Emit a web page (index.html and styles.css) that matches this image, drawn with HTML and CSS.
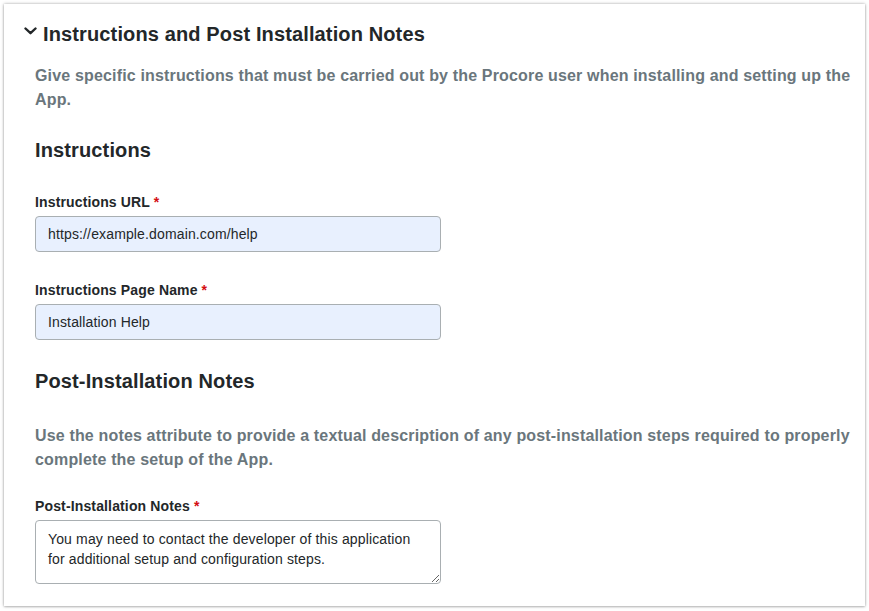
FILE: index.html
```html
<!DOCTYPE html>
<html lang="en">
<head>
<meta charset="utf-8">
<title>Instructions and Post Installation Notes</title>
<link rel="stylesheet" href="styles.css">
</head>
<body>
<section class="card">
  <header class="card-header">
    <svg class="chevron" width="13" height="8" viewBox="0 0 13 8" aria-hidden="true"><path d="M1.5 1.5 L6.5 6.2 L11.5 1.5" fill="none" stroke="#232729" stroke-width="2.4" stroke-linecap="round" stroke-linejoin="round"/></svg>
    <h2 class="card-title">Instructions and Post Installation Notes</h2>
  </header>
  <div class="card-body">
    <p class="desc desc-top">Give specific instructions that must be carried out by the Procore user when installing and setting up the App.</p>
    <h3 class="section-title first">Instructions</h3>
    <div class="field field-first">
      <label class="label">Instructions URL <span class="req">*</span></label>
      <input class="input" type="text" value="https://example.domain.com/help">
    </div>
    <div class="field field-next">
      <label class="label">Instructions Page Name <span class="req">*</span></label>
      <input class="input" type="text" value="Installation Help">
    </div>
    <h3 class="section-title second">Post-Installation Notes</h3>
    <p class="desc desc-notes">Use the notes attribute to provide a textual description of any post-installation steps required to properly complete the setup of the App.</p>
    <div class="field field-notes">
      <label class="label">Post-Installation Notes <span class="req">*</span></label>
      <textarea class="textarea">You may need to contact the developer of this application for additional setup and configuration steps.</textarea>
    </div>
  </div>
</section>
</body>
</html>
```
FILE: styles.css
```css
* { box-sizing: border-box; }
html, body { margin: 0; padding: 0; background: #ffffff; }
body {
  font-family: "Liberation Sans", Arial, Helvetica, sans-serif;
  color: #232729;
  padding: 4px;
}
.card {
  width: 861px;
  height: 602px;
  background: #ffffff;
  box-shadow: 0 0 3px rgba(0, 0, 0, 0.35), 0 1px 2px rgba(0, 0, 0, 0.15);
  padding: 18px 10px 22px 0;
  overflow: hidden;
}
.card-header {
  display: flex;
  align-items: center;
  gap: 6px;
  padding-left: 20px;
  height: 24px;
}
.chevron { display: block; margin-top: -6px; }
.card-title {
  margin: 0;
  font-size: 20px;
  line-height: 24px;
  font-weight: 700;
  letter-spacing: 0.13px;
  color: #232729;
}
.card-body { padding-left: 31px; }
.desc {
  margin: 0;
  font-size: 16px;
  line-height: 24px;
  font-weight: 700;
  letter-spacing: 0.16px;
  color: #6a767c;
}
.desc-top { margin-top: 18px; }
.section-title {
  margin: 0;
  font-size: 20px;
  line-height: 24px;
  font-weight: 700;
  letter-spacing: 0.13px;
  color: #232729;
}
.section-title.first { margin-top: 26px; }
.section-title.second { margin-top: 29px; }
.desc-notes { margin-top: 31px; }
.field { display: flex; flex-direction: column; width: 406px; }
.field-first { margin-top: 30px; }
.field-next { margin-top: 28px; }
.field-notes { margin-top: 24px; }
.label {
  font-size: 14px;
  line-height: 20px;
  font-weight: 700;
  letter-spacing: 0.14px;
  color: #232729;
}
.req { color: #d40d12; }
.input {
  margin-top: 4px;
  height: 36px;
  width: 406px;
  border: 1px solid #a9afb2;
  border-radius: 4px;
  background: #e8f0fe;
  padding: 0 12px;
  font-family: "Liberation Sans", Arial, Helvetica, sans-serif;
  font-size: 14px;
  letter-spacing: 0.14px;
  color: #232729;
  outline: none;
}
.textarea {
  margin-top: 4px;
  height: 64px;
  width: 406px;
  border: 1px solid #a9afb2;
  border-radius: 4px;
  background: #ffffff;
  padding: 8px 12px;
  font-family: "Liberation Sans", Arial, Helvetica, sans-serif;
  font-size: 14px;
  line-height: 20px;
  letter-spacing: 0.14px;
  color: #232729;
  outline: none;
  resize: vertical;
  overflow: hidden;
}
```
